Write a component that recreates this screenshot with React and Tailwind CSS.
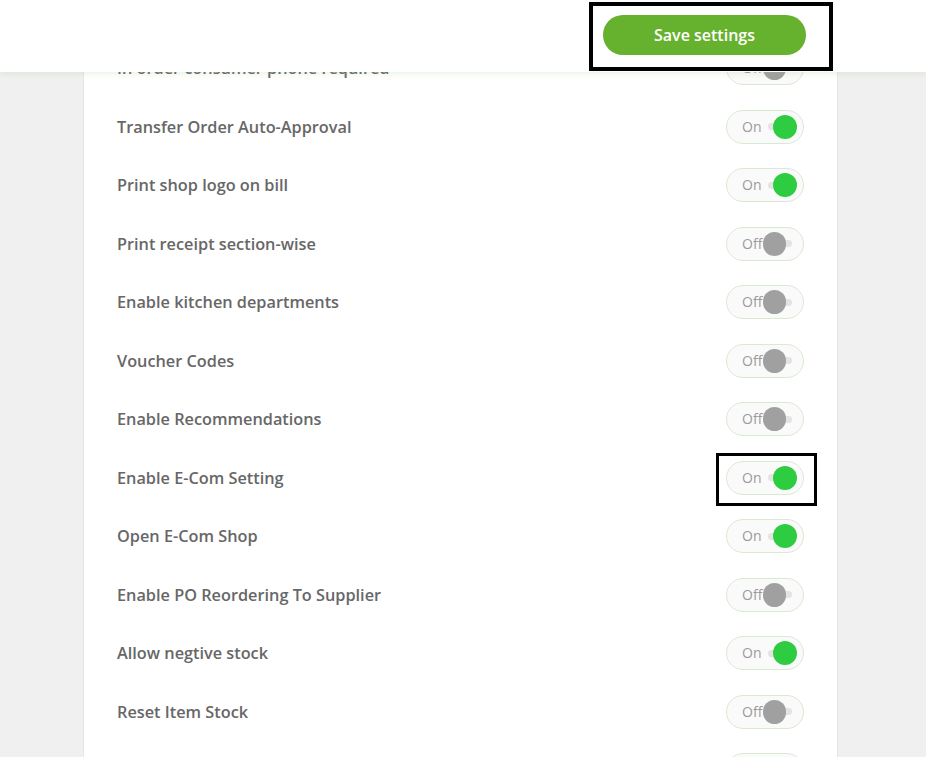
import React from 'react';

const settings = [
  { label: 'In order consumer phone required', on: false },
  { label: 'Transfer Order Auto-Approval', on: true },
  { label: 'Print shop logo on bill', on: true },
  { label: 'Print receipt section-wise', on: false },
  { label: 'Enable kitchen departments', on: false },
  { label: 'Voucher Codes', on: false },
  { label: 'Enable Recommendations', on: false },
  { label: 'Enable E-Com Setting', on: true, marked: true },
  { label: 'Open E-Com Shop', on: true },
  { label: 'Enable PO Reordering To Supplier', on: false },
  { label: 'Allow negtive stock', on: true },
  { label: 'Reset Item Stock', on: false },
];

// knob sits on a short track; the track is what the knob slides along
const Toggle = ({ on, marked, bare }) => (
  <div className="relative">
    <div className="flex items-center w-[78px] h-[34px] pl-[15px] rounded-full border border-[#d9ead4] bg-[#fafafa]">
      <span className="w-[21px] text-[14px] leading-none text-[#9a9a9a]">
        {bare ? '' : on ? 'On' : 'Off'}
      </span>
      <div className={`relative flex items-center w-[34px] h-[24px] ${on ? 'justify-end' : 'justify-start'}`}>
        <span className="absolute left-[5px] w-[24px] h-[7px] rounded-full bg-[#e3e3e3]" />
        <span
          className={`relative h-[24px] rounded-full ${
            on ? 'w-[24px] bg-[#2ecc40]' : 'w-[23px] bg-[#a0a0a0]'
          }`}
        />
      </div>
    </div>
    {marked && (
      <div className="absolute -left-[10px] -right-[13px] -top-[8px] -bottom-[11px] border-[3px] border-black" />
    )}
  </div>
);

const App = () => {
  return (
    <div className="relative h-[757px] bg-[#f0f0f0] overflow-hidden font-['Open_Sans',sans-serif]">
      <div className="ml-[83px] w-[755px] bg-white border-x border-[#dfeadb] pt-[39px] px-[33px]">
        {settings.map((s) => (
          <div key={s.label} className="flex items-center justify-between h-[58.5px]">
            <span className="text-[16.3px] font-semibold text-[#676767]">{s.label}</span>
            <Toggle on={s.on} marked={s.marked} />
          </div>
        ))}
        <div className="flex items-center justify-end h-[58.5px]">
          <Toggle on bare />
        </div>
      </div>

      <div className="fixed top-0 left-0 right-0 h-[72px] bg-white shadow-[0_2px_5px_rgba(140,190,110,0.18)] flex items-start justify-end pt-[15px] pr-[120px]">
        <div className="relative">
          <button
            type="button"
            className="w-[203px] h-[40px] rounded-full bg-[#66b12e] text-white text-[16px] font-semibold"
          >
            Save settings
          </button>
          <div className="absolute -left-[14px] -right-[27px] -top-[13px] -bottom-[16px] border-[4px] border-black" />
        </div>
      </div>
    </div>
  );
};

export default App;
